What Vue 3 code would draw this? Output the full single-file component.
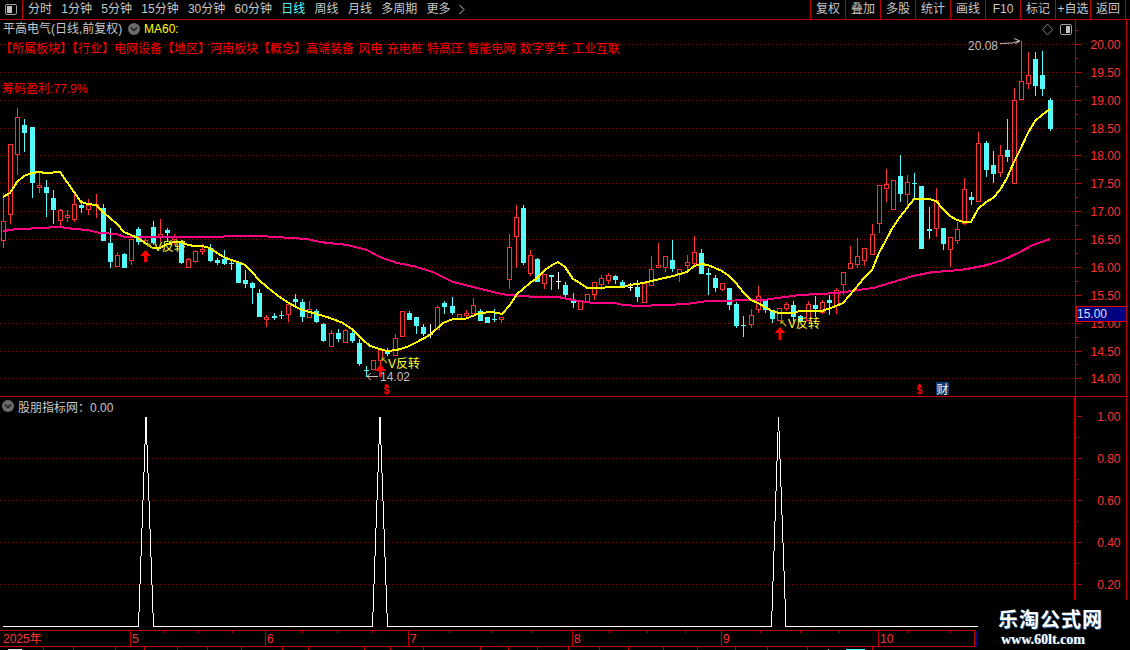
<script setup>
const raw = `r 193 221 240 248|r 144 144 214 224|r 108 117 154 175|c 119 125 133 152|c 127 127 183 198|r 173 185 187 193|c 180 187 193 217|c 190 198 210 224|r 209 210 220 228|r 210 215 217 222|r 193 204 219 222|c 200 205 208 213|r 199 205 209 215|r 194 204 205 218|c 204 208 241 241|c 228 243 262 268|r 252 255 266 266|c 253 254 268 268|r 239 239 260 265|c 227 229 242 245|r 238 240 243 245|c 221 227 243 245|r 219 234 237 242|c 228 230 233 242|r 234 237 239 245|c 240 242 263 264|r 258 259 267 267|r 250 251 261 263|r 244 249 251 255|c 244 248 261 262|c 258 260 263 265|c 250 259 264 265|c 260 263 264 270|c 262 262 283 283|c 270 280 284 288|c 282 283 288 304|c 289 293 317 317|r 315 317 319 327|c 313 316 318 320|c 311 315 316 319|r 302 304 314 322|c 294 299 302 305|c 299 302 317 322|r 301 309 317 318|c 309 311 322 323|c 323 324 341 342|r 330 333 346 346|c 329 333 339 342|r 329 330 342 342|c 330 333 341 343|c 339 343 364 366|c 366 370 371 377|r 360 360 369 369|r 350 350 360 373|c 348 351 354 356|r 334 338 355 355|r 311 311 336 336|c 311 313 320 320|c 317 317 326 334|c 324 327 334 336|w 324 334 335 338|r 305 307 329 329|c 301 303 307 314|c 297 306 313 315|r 314 314 318 318|r 310 313 315 318|r 298 305 313 313|c 309 311 321 321|c 317 317 323 323|c 309 319 320 322|r 317 317 319 323|r 234 247 279 289|r 205 217 236 268|c 205 208 263 265|r 250 255 273 276|c 258 259 282 282|r 274 274 283 289|c 275 275 277 290|w 272 281 282 289|c 282 285 295 297|c 293 300 303 308|r 300 301 309 310|r 294 294 301 301|r 282 282 294 300|r 275 278 284 290|r 273 275 280 284|c 275 276 280 284|c 280 282 288 288|w 283 287 288 291|c 280 287 297 302|r 283 283 302 302|r 256 269 285 285|r 243 265 267 267|r 256 256 267 272|c 240 260 269 272|r 269 269 273 282|r 255 262 265 270|r 236 252 263 266|c 249 253 274 274|c 268 273 275 295|c 275 278 288 292|r 283 283 289 291|c 288 288 305 310|c 302 304 326 328|c 316 325 326 337|r 309 315 324 328|r 286 296 309 313|c 300 300 310 313|c 310 310 319 323|r 308 308 320 320|r 302 304 308 311|c 301 305 317 322|c 315 316 322 322|r 301 304 320 320|c 296 305 309 317|r 300 302 312 314|c 295 300 303 315|r 288 290 305 314|r 272 272 284 295|r 246 263 268 268|r 238 256 264 268|r 248 248 260 266|r 224 234 254 254|r 185 185 223 233|r 169 184 188 202|r 180 180 209 209|c 155 176 194 202|r 175 182 194 207|c 173 183 184 198|c 186 186 249 249|c 207 229 231 239|r 188 200 228 237|c 228 228 244 250|r 237 237 249 267|r 222 229 240 244|r 178 189 223 225|c 192 197 200 205|r 132 143 201 201|c 141 143 170 177|c 151 165 174 183|r 145 155 172 177|c 119 150 157 162|r 88 100 183 183|r 41 81 99 99|r 52 75 83 89|c 52 59 86 96|c 51 75 89 96|c 98 100 129 131`

const steps = [4, 13, 21, 29, 38, 46, 55, 63, 71, 80, 88, 96, 105, 113, 122, 130, 138, 147]
const candles = raw.split('|').map((row, i) => {
  const [kind, wt, bt, bb, wb] = row.split(' ')
  const x = 3 + 7 * i + steps.filter((s) => s <= i).length
  return { id: i, kind, x, wt: +wt, bt: +bt, bb: +bb, wb: +wb }
})

const yellow = '3,197 10,193 17,182 24,176 32,173 39,172 46,173 60,172 67,182 74,192 81,202 88,204 96,205 103,212 110,218 117,224 124,232 131,235 138,238 145,243 153,248 160,248 167,244 174,242 181,242 188,245 195,246 202,246 210,248 217,253 224,257 231,260 238,262 245,265 252,272 259,280 267,287 277,295 287,302 300,309 313,313 327,317 343,323 353,330 363,340 370,346 380,349 387,351 397,350 407,347 417,342 430,335 443,323 453,319 465,319 480,313 493,312 502,314 510,305 517,294 523,289 530,283 537,278 545,270 552,265 558,262 565,267 573,279 580,283 587,288 623,287 630,285 643,283 660,279 673,276 687,272 694,266 701,264 708,265 722,271 729,276 736,283 743,292 751,300 758,303 765,307 772,311 779,313 793,313 800,311 808,311 822,311 836,306 843,303 850,295 864,278 872,270 879,253 886,240 893,227 900,217 907,208 914,199 929,199 936,201 943,209 950,216 957,220 964,222 971,222 978,209 986,202 993,198 1000,190 1007,178 1014,162 1020,150 1028,133 1035,121 1042,115 1050,109'
const pink = '3,231 17,229 46,228 53,227 60,227 74,229 88,230 100,233 117,234 124,237 174,237 210,237 238,236 260,236 307,239 320,242 347,245 367,250 380,257 397,263 413,266 433,272 453,282 473,287 493,292 507,295 537,297 558,297 573,300 593,303 615,303 623,305 638,306 665,305 687,304 707,301 763,300 800,295 837,293 873,288 890,283 913,276 933,272 950,271 967,269 987,265 1003,260 1020,252 1033,245 1050,239'
const spikes = '3,626.5 138.5,626.5 146,417 153.5,626.5 372.5,626.5 380,417 387.5,626.5 771.5,626.5 778.5,417 786,626.5 978,626.5'

const priceLevels = Array.from({ length: 13 }, (_, k) => ({
  y: Math.round(44 + 27.87 * k) + 0.5,
  label: (20 - k * 0.5).toFixed(2),
}))
const priceMinor = priceLevels.map((l) => l.y - 14)
const subLevels = [1, 0.8, 0.6, 0.4, 0.2].map((v, k) => ({ y: 416.5 + 42 * k, label: v.toFixed(2) }))
const subGrid = subLevels.slice(1)
const subMinor = [437.5, 479.5, 521.5, 563.5, 605.5]

const tabs = ['分时', '1分钟', '5分钟', '15分钟', '30分钟', '60分钟', '日线', '周线', '月线', '多周期', '更多']
const actions = ['复权', '叠加', '多股', '统计', '画线', 'F10', '标记', '+自选', '返回']
const months = [
  { x: 130, label: '5' }, { x: 265, label: '6' }, { x: 408, label: '7' },
  { x: 572, label: '8' }, { x: 721, label: '9' }, { x: 878, label: '10' },
]
const timeTicks = [164, 198, 232, 302, 337, 372, 449, 491, 531, 610, 647, 685, 760, 800, 839, 908, 950]
const statusSeps = [43, 73, 115, 144, 177, 207, 241, 282, 308, 364, 390, 423, 480, 508, 537, 568, 599, 628, 663, 697, 735, 767, 807, 872]
const marks = [
  { tipX: 145.5, tipY: 250, baseY: 256, endY: 262, tx: 154, ty: 251, ax: 147 },
  { tipX: 380.5, tipY: 364, baseY: 371, endY: 377, tx: 388, ty: 368, ax: 381 },
  { tipX: 780, tipY: 327, baseY: 333, endY: 340, tx: 788, ty: 328, ax: 780 },
]
const arrowPoints = (m) => {
  const x = m.tipX
  return `${x},${m.tipY} ${x + 5.5},${m.baseY} ${x + 1.5},${m.baseY} ${x + 1.5},${m.endY} ${x - 1.5},${m.endY} ${x - 1.5},${m.baseY} ${x - 5.5},${m.baseY}`
}
</script>

<template>
  <div class="screen">
    <header class="toolbar">
      <div class="panel-toggle">
        <svg width="12" height="11" viewBox="0 0 12 11">
          <rect x="0.5" y="0.5" width="11" height="10" rx="1.5" class="toggle-box" />
          <rect x="2" y="2" width="5" height="7" class="toggle-fill" />
        </svg>
      </div>
      <nav class="tabs">
        <span v-for="t in tabs" :key="t" class="tab" :class="{ active: t === '日线' }">{{ t }}</span>
        <svg class="more" width="6" height="11" viewBox="0 0 6 11"><path d="M0.5 1 L5 5.5 L0.5 10" /></svg>
      </nav>
      <div class="actions">
        <span v-for="a in actions" :key="a" class="action">{{ a }}</span>
      </div>
    </header>

    <section class="row row-main">
      <div class="plot-wrap">
        <svg class="plot" width="1075" height="376" viewBox="0 20 1075 376">
          <line v-for="l in priceLevels" :key="l.y" x1="0" x2="1075" :y1="l.y" :y2="l.y" class="grid" />
          <text :x="marks[0].tx" :y="marks[0].ty" class="lbl v-text">V反转</text>

          <g v-for="c in candles" :key="c.id" class="crisp">
            <line :x1="c.x + 0.5" :x2="c.x + 0.5" :y1="c.wt" :y2="c.wb" :class="'wick-' + c.kind" />
            <rect v-if="c.kind === 'r'" :x="c.x - 1.5" :y="c.bt + 0.5" width="4" :height="c.bb - c.bt" class="body-r" />
            <rect v-else :x="c.x - 2" :y="c.bt" width="5" :height="Math.max(c.bb - c.bt, 1)" :class="'body-' + c.kind" />
          </g>

          <polyline :points="pink" class="ma ma60" />
          <polyline :points="yellow" class="ma ma5" />

          <g v-for="(m, i) in marks" :key="m.tipX">
            <polygon :points="arrowPoints(m)" class="up-arrow" />
            <path :d="`M${m.ax + 1} ${m.tipY - 6} L${m.ax + 6} ${m.tipY - 1} M${m.ax + 1} ${m.tipY - 6} l3 0 M${m.ax + 1} ${m.tipY - 6} l0 3`" class="tiny-arrow" />
            <text v-if="i > 0" :x="m.tx" :y="m.ty" class="lbl v-text">V反转</text>
          </g>

          <text x="968" y="50" class="lbl grey">20.08</text>
          <path d="M1000 43.5 L1012 43 L1019 41 M1014 38.5 L1020 41 L1015 44" class="callout" />
          <path d="M378 376.5 L367 376.5 M371 373 L367 376.5 L371 380" class="callout" />
          <text x="380" y="381" class="lbl grey">14.02</text>

          <polygon points="1047.5,24 1052.5,29.5 1047.5,35 1042.5,29.5" class="diamond" />
          <rect x="1060.5" y="24.5" width="11" height="10" rx="1.5" class="toggle-box" />
          <rect x="1066" y="26" width="4" height="7" class="toggle-fill" />

          <g class="dollar">
            <polygon points="386.5,383.5 384,386 389,386" />
            <text x="386.5" y="394" text-anchor="middle">$</text>
            <polygon points="919.5,383.5 917,386 922,386" />
            <text x="919.5" y="394" text-anchor="middle">$</text>
          </g>
          <rect x="936" y="382" width="13" height="13" class="fin-box" />
          <text x="936.5" y="393.5" class="lbl fin-text">财</text>
        </svg>

        <div class="overlay">
          <div class="title-row">
            <span class="stock">平高电气(日线,前复权)</span>
            <svg class="chev" width="12" height="12" viewBox="0 0 12 12">
              <circle cx="6" cy="6" r="6" class="chev-bg" />
              <path d="M3 4.5 L6 7.5 L9 4.5" class="chev-mark" />
            </svg>
            <span class="ma-name">MA60:</span>
          </div>
          <div class="tags">【所属板块】【行业】电网设备【地区】河南板块【概念】高端装备 风电 充电桩 特高压 智能电网 数字孪生 工业互联</div>
          <div class="profit">筹码盈利:77.9%</div>
        </div>
      </div>

      <svg class="scale" width="50" height="376" viewBox="1076 20 50 376">
        <line v-for="y in priceMinor" :key="y" x1="1076" x2="1078" :y1="y" :y2="y" class="tick" />
        <g v-for="l in priceLevels" :key="l.y">
          <line x1="1076" x2="1081" :y1="l.y" :y2="l.y" class="tick" />
          <text x="1120.5" :y="l.y + 4.5" text-anchor="end" class="lbl axis-num">{{ l.label }}</text>
        </g>
        <rect x="1076.5" y="306.5" width="50" height="15" class="price-box" />
        <text x="1077" y="318" class="lbl price-text">15.00</text>
      </svg>
    </section>

    <section class="row row-sub">
      <div class="plot-wrap">
        <svg class="plot" width="1074" height="233" viewBox="0 397 1074 233">
          <line v-for="l in subGrid" :key="l.y" x1="0" x2="1074" :y1="l.y" :y2="l.y" class="grid" />
          <polyline :points="spikes" class="spike" />
        </svg>
        <div class="sub-title">
          <svg width="12" height="12" viewBox="0 0 12 12">
            <circle cx="6" cy="6" r="6" class="chev-bg" />
            <path d="M3 4.5 L6 7.5 L9 4.5" class="chev-mark" />
          </svg>
          <span>股朋指标网：0.00</span>
        </div>
      </div>
      <svg class="scale scale-sub" width="50" height="233" viewBox="1076 397 50 233">
        <line v-for="y in subMinor" :key="y" x1="1077" x2="1079" :y1="y" :y2="y" class="tick" />
        <g v-for="l in subLevels" :key="l.y">
          <line x1="1077" x2="1082" :y1="l.y" :y2="l.y" class="tick" />
          <text x="1120.5" :y="l.y + 4.5" text-anchor="end" class="lbl axis-num">{{ l.label }}</text>
        </g>
      </svg>
    </section>

    <svg class="timeline" width="978" height="20" viewBox="0 630 978 20">
      <line x1="0" x2="975" y1="630.5" y2="630.5" class="tick" />
      <line x1="0" x2="975" y1="646.5" y2="646.5" class="tick" />
      <text x="3" y="643" class="lbl axis-num">2025年</text>
      <g v-for="m in months" :key="m.x">
        <line :x1="m.x + 0.5" :x2="m.x + 0.5" y1="631" y2="646" class="tick" />
        <text :x="m.x + 2" y="643" class="lbl axis-num">{{ m.label }}</text>
      </g>
      <line v-for="x in timeTicks" :key="x" :x1="x + 0.5" :x2="x + 0.5" y1="631" y2="633" class="tick" />
      <line x1="974.5" x2="974.5" y1="631" y2="647" class="tick" />
      <rect x="975" y="631" width="3" height="16" class="sliver" />
      <line v-for="x in statusSeps" :key="x" :x1="x + 0.5" :x2="x + 0.5" y1="647" y2="650" class="tick" />
      <rect x="8" y="649" width="14" height="1" class="speck-white" />
      <rect x="828" y="649" width="1" height="1" class="speck-white" />
      <rect x="846" y="649" width="19" height="1" class="speck-cyan" />
    </svg>

    <aside class="watermark">
      <div class="wm-cn">乐淘公式网</div>
      <div class="wm-en">www.60lt.com</div>
    </aside>
  </div>
</template>

<style>
html, body { margin: 0; background: #000; }
</style>

<style scoped>
.screen {
  position: relative;
  width: 1130px;
  height: 650px;
  overflow: hidden;
  background: #000;
  font-family: "Liberation Sans", "Noto Sans CJK SC", sans-serif;
  font-size: 12px;
  color: #c8c8c8;
}
.toolbar {
  display: flex;
  align-items: stretch;
  height: 19px;
  border-bottom: 1px solid #c00000;
  line-height: 19px;
}
.panel-toggle {
  box-sizing: border-box;
  width: 23px;
  border-right: 1px solid #c00000;
  display: flex;
  align-items: center;
  justify-content: center;
}
.panel-toggle svg { display: block; }
.toggle-box { fill: none; stroke: #a0a0a0; }
.toggle-fill { fill: #c0c0c0; }
.tabs {
  display: flex;
  align-items: center;
  gap: 9.3px;
  margin-left: 5px;
}
.tab.active { color: #54fcfc; }
.more { fill: none; stroke: #c8c8c8; margin-left: -1px; }
.actions {
  display: flex;
  margin-left: auto;
  margin-right: 4px;
  border-right: 1px solid #c00000;
}
.action {
  box-sizing: border-box;
  width: 35px;
  border-left: 1px solid #c00000;
  text-align: center;
  white-space: nowrap;
}
.row {
  display: flex;
  width: 1127px;
}
.row-main {
  height: 376px;
  border-bottom: 1px solid #c00000;
}
.row-sub { height: 233px; }
.plot-wrap { position: relative; }
.plot { display: block; }
.scale {
  display: block;
  border-left: 1px solid #c00000;
  border-right: 1px solid #c00000;
}
.scale-sub { border-left-width: 2px; }
.grid {
  stroke: #900000;
  stroke-dasharray: 1 3;
  shape-rendering: crispEdges;
}
.crisp { shape-rendering: crispEdges; }
.wick-r { stroke: #ff3232; }
.wick-c { stroke: #54fcfc; }
.wick-w { stroke: #ffffff; }
.body-r { fill: #000; stroke: #ff3232; }
.body-c { fill: #54fcfc; }
.body-w { fill: #ffffff; }
.ma { fill: none; stroke-width: 2; shape-rendering: crispEdges; }
.ma5 { stroke: #ffff00; }
.ma60 { stroke: #ff0080; }
.up-arrow { fill: #ff0000; }
.tiny-arrow { fill: none; stroke: #b0b000; stroke-width: 1.2; }
.lbl {
  font-family: "Liberation Sans", "Noto Sans CJK SC", sans-serif;
  font-size: 12px;
}
.v-text { fill: #ffff30; }
.grey { fill: #c0c0c0; }
.callout { fill: none; stroke: #c0c0c0; }
.diamond { fill: none; stroke: #808080; }
.dollar polygon { fill: #ff0000; }
.dollar text {
  fill: #ff0000;
  font: bold 10px "Liberation Sans", sans-serif;
}
.fin-box { fill: #0c3c72; }
.fin-text { fill: #f0f0f0; }
.overlay {
  position: absolute;
  left: 0;
  top: 0;
  line-height: 18px;
  white-space: nowrap;
}
.title-row {
  display: flex;
  align-items: center;
  padding-left: 3px;
  height: 18px;
}
.stock { width: 125px; }
.chev { display: block; }
.chev-bg { fill: #6a6a6a; }
.chev-mark { fill: none; stroke: #1c1c1c; stroke-width: 1.5; }
.ma-name { color: #ffff00; margin-left: 4px; }
.tags {
  color: #ff0000;
  margin-top: 2px;
  word-spacing: 1px;
}
.profit {
  color: #ff0000;
  margin-top: 22px;
  padding-left: 2px;
}
.tick { stroke: #c00000; shape-rendering: crispEdges; }
.axis-num { fill: #ff3232; }
.price-box { fill: #000080; stroke: #e00000; shape-rendering: crispEdges; }
.price-text { fill: #dce4ff; }
.spike { fill: none; stroke: #ffffff; shape-rendering: crispEdges; }
.sub-title {
  position: absolute;
  left: 2px;
  top: 0;
  height: 18px;
  display: flex;
  align-items: center;
  gap: 4px;
}
.sub-title svg { display: block; }
.timeline { display: block; }
.sliver { fill: #000080; }
.speck-white { fill: #e0e0e0; }
.speck-cyan { fill: #54fcfc; }
.watermark {
  position: absolute;
  left: 978px;
  top: 600px;
  width: 152px;
  height: 50px;
  box-sizing: border-box;
  padding: 7px 0 0 20px;
  background: #000;
  color: #fff;
  white-space: nowrap;
}
.wm-cn {
  font: 700 20px/24px "Noto Sans CJK SC", sans-serif;
  letter-spacing: 1px;
  text-shadow: 1px 1px 0 #1f5a9a;
}
.wm-en {
  font: 700 14px/18px "Liberation Serif", serif;
  margin-left: 3px;
  text-shadow: 1px 0 0 #1f5a9a;
}
</style>
